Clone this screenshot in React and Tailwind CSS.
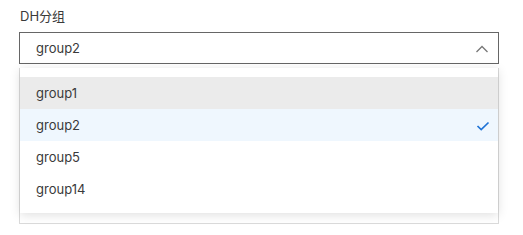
import React from "react";

const options = ["group1", "group2", "group5", "group14"];

export default function App() {
  return (
    <div className="w-[523px] h-[235px] bg-white font-['Inter','Noto_Sans_CJK_SC',sans-serif] text-[#3a3a3a]">
      <div className="pl-[19px] pr-[24px] pt-[6px]">
        <div className="text-[13px] leading-5 pl-[1px]">DH分组</div>
        <div className="relative mt-[6px]">
          <div className="h-8 border border-[#666] flex items-center justify-between pl-4 pr-[8px]">
            <span className="text-[13px] pt-[2px]">group2</span>
            <svg width="14" height="14" viewBox="0 0 14 14" className="mr-[1px] mt-[1px]">
              <path d="M1.5 10 L7 4.5 L12.5 10" fill="none" stroke="#777" strokeWidth="1.3" />
            </svg>
          </div>
          <div className="mt-1 h-[156px] border border-[#dadada]" />
          <div className="absolute left-[1px] right-[1px] top-[36px] bg-white shadow-[0_2px_10px_rgba(0,0,0,0.13)] pt-[9px] pb-2">
            {options.map((o, i) => (
              <div
                key={o}
                className={
                  "h-8 flex items-center justify-between pl-4 pr-[8px] text-[13px] " +
                  (i === 0 ? "bg-[#ebebeb]" : i === 1 ? "bg-[#eff7fe]" : "bg-white")
                }
              >
                <span className="pt-[2px]">{o}</span>
                {i === 1 && (
                  <svg width="14" height="14" viewBox="0 0 14 14" className="mt-[1px]">
                    <path d="M1.5 7 L5.2 10.5 L12.5 3.5" fill="none" stroke="#1f73d6" strokeWidth="1.7" />
                  </svg>
                )}
              </div>
            ))}
          </div>
        </div>
      </div>
    </div>
  );
}
